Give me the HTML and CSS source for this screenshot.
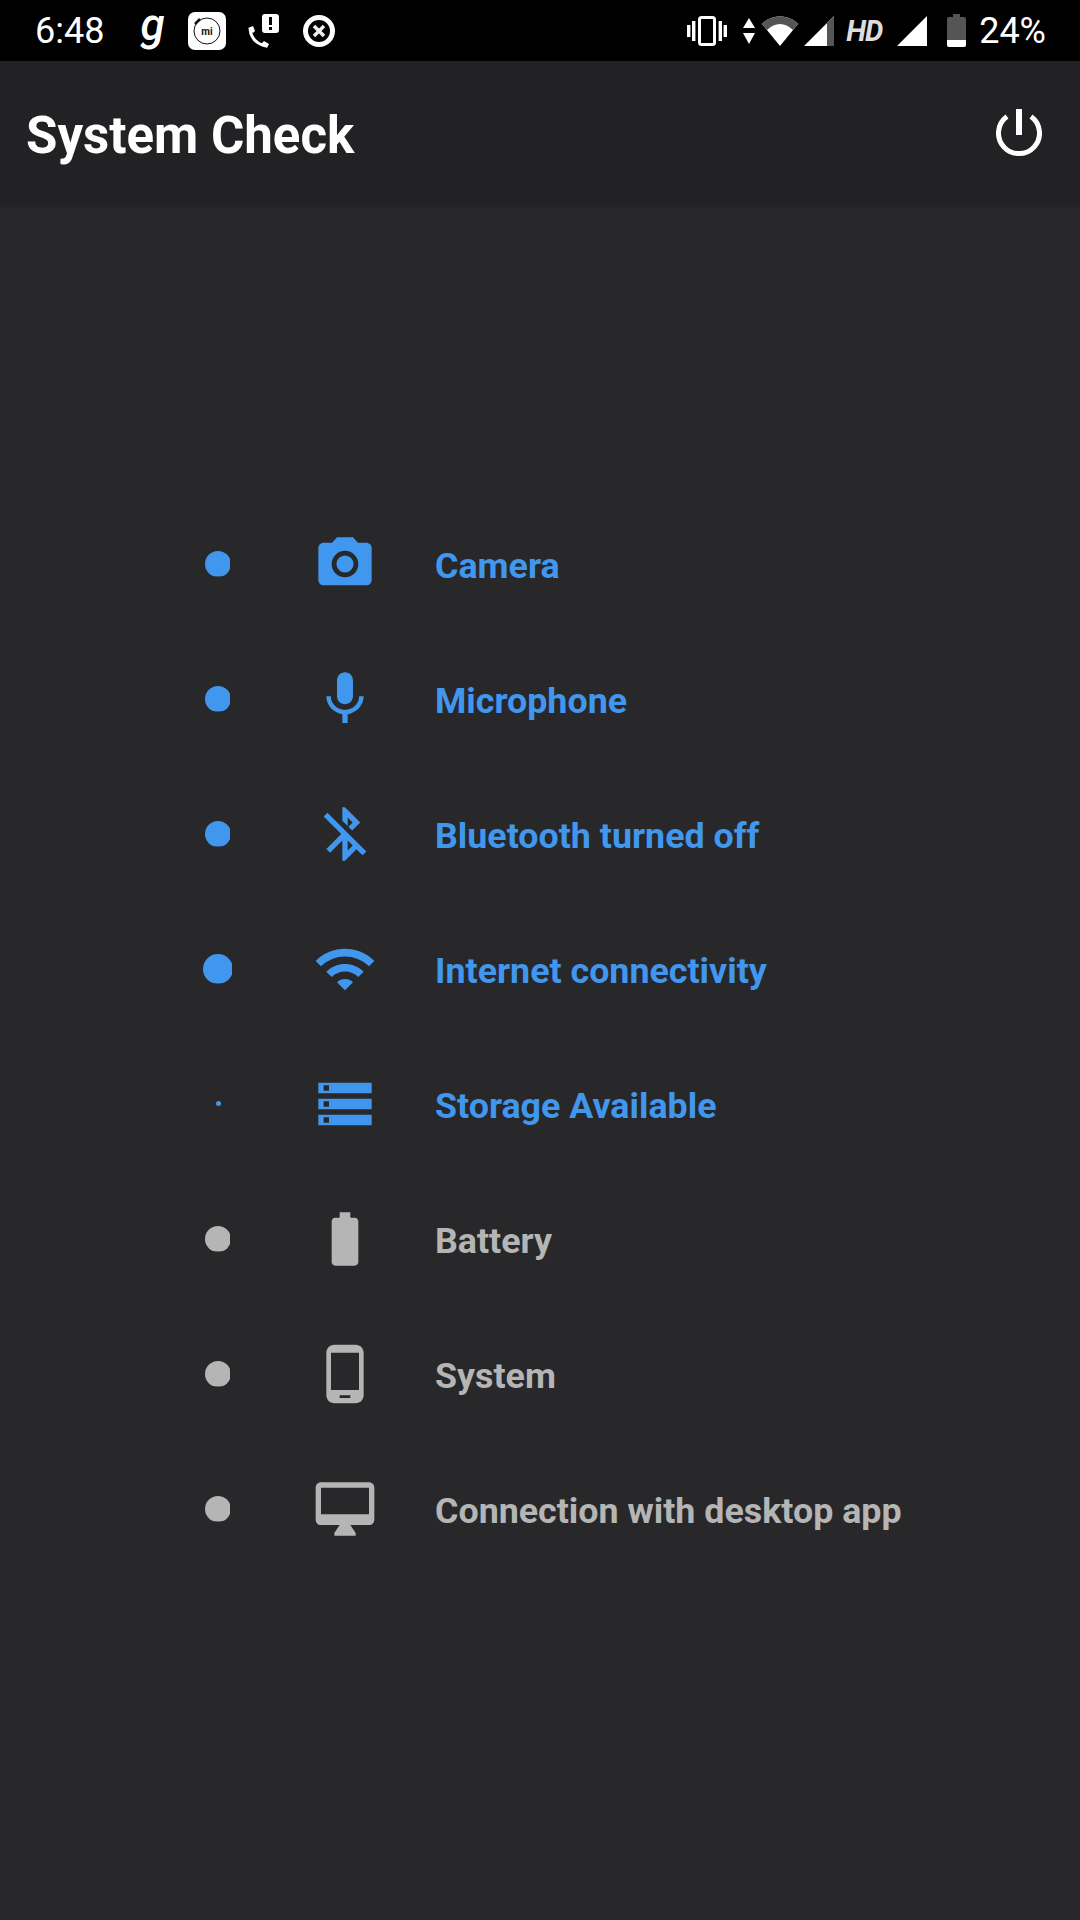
FILE: index.html
```html
<!DOCTYPE html>
<html>
<head>
    <meta charset="utf-8">
    <title>System Check</title>
    <link rel="stylesheet" href="styles.css">
</head>
<body>
    <div class="status-bar">
        <div class="status-left">
            <span class="clock">6:48</span>
            <span class="g-logo">g</span>
            <svg class="mi-app" width="38" height="38" viewBox="0 0 38 38">
                <rect width="38" height="38" rx="7" fill="#fff"/>
                <circle cx="19" cy="19" r="13" fill="none" stroke="#111" stroke-width="1"/>
                <path d="M7 12L12 7" stroke="#111" stroke-width="2.5"/>
                <text x="19" y="23" text-anchor="middle" class="mi-text">mi</text>
            </svg>
            <svg class="call-alert" width="34" height="36" viewBox="0 0 34 36">
                <path d="M3 16C4 25 10 31 19 33" fill="none" stroke="#fff" stroke-width="3"/>
                <path d="M1 15l5-2 2 5-2 2zM14 31l3-3 5 3-2 4z" fill="#fff"/>
                <rect x="15" y="1" width="17" height="19" rx="3" fill="#fff"/>
                <rect x="22" y="4" width="3" height="8" fill="#000"/>
                <rect x="22" y="14" width="3" height="3" fill="#000"/>
            </svg>
            <svg class="cancel" width="32" height="32" viewBox="0 0 32 32">
                <circle cx="16" cy="16" r="13.5" fill="none" stroke="#fff" stroke-width="5"/>
                <path d="M11 11l10 10M21 11L11 21" stroke="#eee" stroke-width="3.5"/>
            </svg>
        </div>
        <div class="status-right">
            <svg width="40" height="30" viewBox="0 0 40 30">
                <rect x="12.5" y="1.5" width="15" height="27" rx="2" fill="none" stroke="#fff" stroke-width="3"/>
                <path d="M0 9h3.4v12H0zM5 5h3.4v20H5zM31.6 5H35v20h-3.4zM36.6 9H40v12h-3.4z" fill="#fff"/>
            </svg>
            <svg class="data-arrows" width="12" height="26" viewBox="0 0 12 26">
                <path d="M6 0l6 10H0zM0 15h12L6 26z" fill="#fff"/>
            </svg>
            <svg class="wifi-signal" width="38" height="31" viewBox="0 0 38 31">
                <path d="M1 9C10 -1 28 -1 37 9L19 31z" fill="#fff"/>
                <path d="M1 9C10 -1 28 -1 37 9L32 15C24 7 14 7 6 15z" fill="#555"/>
            </svg>
            <svg class="cell-signal" width="30" height="30" viewBox="0 0 30 30">
                <path d="M0 30L30 0V30z" fill="#fff"/>
                <path d="M23 7L30 0V30H23z" fill="#555"/>
            </svg>
            <span class="hd">HD</span>
            <svg class="cell-signal-full" width="30" height="30" viewBox="0 0 30 30">
                <path d="M0 30L30 0V30z" fill="#fff"/>
            </svg>
            <svg class="battery-status" width="19" height="33" viewBox="0 0 19 33">
                <path d="M6 0h7v3h4a2 2 0 0 1 2 2v26a2 2 0 0 1-2 2H2a2 2 0 0 1-2-2V5a2 2 0 0 1 2-2h4z" fill="#555"/>
                <path d="M0 26h19v5a2 2 0 0 1-2 2H2a2 2 0 0 1-2-2z" fill="#fff"/>
            </svg>
            <span class="clock percent">24%</span>
        </div>
    </div>

    <div class="app-bar">
        <div class="title">System Check</div>
        <svg class="power" width="46" height="48" viewBox="0 0 46 48">
            <path d="M11 7.5A20.5 20.5 0 1 0 35 7.5" fill="none" stroke="#fff" stroke-width="5"/>
            <rect x="20" y="0" width="6" height="26" fill="#fff"/>
        </svg>
    </div>

    <div class="check-list">
        <div class="check-row active">
            <div class="dot-cell"><div class="dot"></div></div>
            <svg class="row-icon" viewBox="0 0 24 24"><circle cx="12" cy="12" r="3.2"/><path d="M9 2L7.17 4H4c-1.1 0-2 .9-2 2v12c0 1.1.9 2 2 2h16c1.1 0 2-.9 2-2V6c0-1.1-.9-2-2-2h-3.17L15 2H9zm3 15c-2.76 0-5-2.24-5-5s2.24-5 5-5 5 2.24 5 5-2.24 5-5 5z"/></svg>
            <div class="row-label">Camera</div>
        </div>
        <div class="check-row active">
            <div class="dot-cell"><div class="dot"></div></div>
            <svg class="row-icon" viewBox="0 0 24 24"><path d="M12 14c1.66 0 2.99-1.34 2.99-3L15 5c0-1.66-1.34-3-3-3S9 3.34 9 5v6c0 1.66 1.34 3 3 3zm5.3-3c0 3-2.54 5.1-5.3 5.1S6.7 14 6.7 11H5c0 3.41 2.72 6.23 6 6.72V21h2v-3.28c3.28-.48 6-3.3 6-6.72h-1.7z"/></svg>
            <div class="row-label">Microphone</div>
        </div>
        <div class="check-row active">
            <div class="dot-cell"><div class="dot"></div></div>
            <svg class="row-icon" viewBox="0 0 24 24"><path d="M13 5.83l1.88 1.88-1.6 1.6 1.41 1.41 3.02-3.02L12 2h-1v5.03l2 2v-3.2zM5.41 4L4 5.41 10.59 12 5 17.59 6.41 19 11 14.41V22h1l4.29-4.29 2.3 2.3L20 18.59 5.41 4zM13 18.17v-3.76l1.88 1.88L13 18.17z"/></svg>
            <div class="row-label">Bluetooth turned off</div>
        </div>
        <div class="check-row active">
            <div class="dot-cell"><div class="dot big"></div></div>
            <svg class="row-icon" viewBox="0 0 24 24"><path d="M1 9l2 2c4.97-4.97 13.03-4.97 18 0l2-2C16.93 2.93 7.08 2.93 1 9zm8 8l3 3 3-3c-1.65-1.66-4.34-1.66-6 0zm-4-4l2 2c2.76-2.76 7.24-2.76 10 0l2-2C15.14 9.14 8.87 9.14 5 13z"/></svg>
            <div class="row-label">Internet connectivity</div>
        </div>
        <div class="check-row active">
            <div class="dot-cell"><div class="dot tiny"></div></div>
            <svg class="row-icon" viewBox="0 0 24 24"><path d="M2 20h20v-4H2v4zm2-3h2v2H4v-2zM2 4v4h20V4H2zm4 3H4V5h2v2zm-4 7h20v-4H2v4zm2-3h2v2H4v-2z"/></svg>
            <div class="row-label">Storage Available</div>
        </div>
        <div class="check-row">
            <div class="dot-cell"><div class="dot"></div></div>
            <svg class="row-icon" viewBox="0 0 24 24"><path d="M15.67 4H14V2h-4v2H8.33C7.6 4 7 4.6 7 5.33v15.33C7 21.4 7.6 22 8.33 22h7.33c.74 0 1.34-.6 1.34-1.33V5.33C17 4.6 16.4 4 15.67 4z"/></svg>
            <div class="row-label">Battery</div>
        </div>
        <div class="check-row">
            <div class="dot-cell"><div class="dot"></div></div>
            <svg class="row-icon" viewBox="0 0 24 24"><path d="M16 1H8C6.34 1 5 2.34 5 4v16c0 1.66 1.34 3 3 3h8c1.66 0 3-1.34 3-3V4c0-1.66-1.34-3-3-3zm-2 20h-4v-1h4v1zm3.25-3H6.75V4h10.5v14z"/></svg>
            <div class="row-label">System</div>
        </div>
        <div class="check-row">
            <div class="dot-cell"><div class="dot"></div></div>
            <svg class="row-icon" viewBox="0 0 24 24"><path d="M21 2H3c-1.1 0-2 .9-2 2v12c0 1.1.9 2 2 2h7l-2 3v1h8v-1l-2-3h7c1.1 0 2-.9 2-2V4c0-1.1-.9-2-2-2zm0 12H3V4h18v10z"/></svg>
            <div class="row-label">Connection with desktop app</div>
        </div>
    </div>
</body>
</html>
```

FILE: styles.css
```css
html, body {
    margin: 0;
    height: 100%;
}
body {
    width: 1080px;
    height: 1920px;
    overflow: hidden;
    display: flex;
    flex-direction: column;
    background-color: #28282a;
    font-family: Roboto, sans-serif;
    color: #fff;
}
svg {
    display: block;
    flex: none;
}

/* Status bar */
.status-bar {
    height: 61px;
    flex: none;
    background-color: #000;
    display: flex;
    justify-content: space-between;
    align-items: center;
    padding: 0 34px 0 35px;
}
.status-left, .status-right {
    display: flex;
    align-items: center;
}
.clock {
    font-size: 36px;
    line-height: 40px;
}
.g-logo {
    margin-left: 36px;
    width: 24px;
    font-size: 44px;
    font-weight: 500;
    font-style: italic;
    line-height: 40px;
    position: relative;
    top: -6px;
}
.mi-app {
    margin-left: 24px;
}
.mi-text {
    font-family: Roboto, sans-serif;
    font-size: 10px;
    font-weight: 700;
    fill: #111;
}
.call-alert {
    margin-left: 21px;
}
.cancel {
    margin-left: 22px;
}
.data-arrows {
    margin-left: 16px;
}
.wifi-signal {
    margin-left: 6px;
}
.cell-signal {
    margin-left: 5px;
}
.hd {
    margin-left: 12px;
    width: 36px;
    font-size: 29px;
    font-weight: 700;
    font-style: italic;
    letter-spacing: -1px;
    color: #ddd;
    line-height: 40px;
}
.cell-signal-full {
    margin-left: 15px;
}
.battery-status {
    margin-left: 20px;
}
.percent {
    margin-left: 13px;
}

/* App bar */
.app-bar {
    height: 143px;
    flex: none;
    box-sizing: border-box;
    background-color: #222224;
    box-shadow: 0 3px 4px rgba(0, 0, 0, 0.1);
    display: flex;
    justify-content: space-between;
    align-items: center;
    padding: 0 38px 0 26px;
}
.title {
    margin-top: 6px;
    font-size: 51px;
    font-weight: 700;
}

/* Check list */
.check-list {
    padding: 292px 0 0 200px;
}
.check-row {
    height: 135px;
    display: flex;
    align-items: center;
    color: #b5b5b5;
}
.check-row.active {
    color: #4197ee;
}
.dot-cell {
    width: 36px;
    display: flex;
    justify-content: center;
}
.dot {
    width: 26px;
    height: 26px;
    border-radius: 50%;
    background-color: currentColor;
    clip-path: inset(0 1px 0 0);
}
.dot.big {
    width: 30px;
    height: 30px;
}
.dot.tiny {
    width: 5px;
    height: 5px;
    clip-path: none;
}
.row-icon {
    width: 64px;
    height: 64px;
    margin-left: 77px;
    fill: currentColor;
}
.row-label {
    margin-left: 58px;
    font-size: 35.8px;
    font-weight: 700;
    position: relative;
    top: 2px;
}
```
